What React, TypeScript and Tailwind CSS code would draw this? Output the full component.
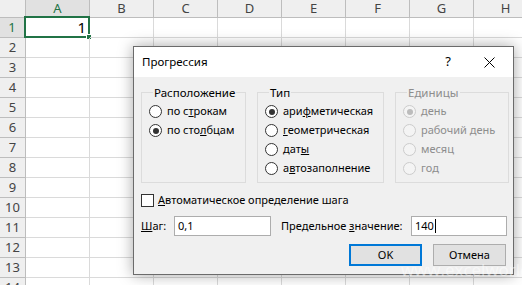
import React from "react";

const cols = ["A", "B", "C", "D", "E", "F", "G", "H"];
const rows = Array.from({ length: 14 }, (_, i) => i + 1);

function Radio({ checked, disabled }: { checked?: boolean; disabled?: boolean }) {
  return (
    <span
      className={
        "flex h-[13px] w-[13px] shrink-0 items-center justify-center rounded-full border " +
        (disabled ? "border-[#cccccc] bg-[#f4f4f4]" : "border-[#333333] bg-white")
      }
    >
      {checked && (
        <span className={"h-[6px] w-[6px] rounded-full " + (disabled ? "bg-[#bcbcbc]" : "bg-[#333333]")} />
      )}
    </span>
  );
}

function RadioRow({
  children,
  checked,
  disabled,
}: {
  children: React.ReactNode;
  checked?: boolean;
  disabled?: boolean;
}) {
  return (
    <div className={"flex h-[19px] items-center gap-[5px] whitespace-nowrap " + (disabled ? "text-[#8d8d8d]" : "text-black")}>
      <Radio checked={checked} disabled={disabled} />
      <span>{children}</span>
    </div>
  );
}

function Group({
  legend,
  width,
  disabled,
  children,
}: {
  legend: string;
  width: string;
  disabled?: boolean;
  children: React.ReactNode;
}) {
  return (
    <fieldset className={"h-[98px] shrink-0 border border-[#dcdcdc] pl-[7px] " + width}>
      <legend className={"ml-[4px] px-[1px] text-[11.5px] leading-[15px] " + (disabled ? "text-[#8d8d8d]" : "text-black")}>
        {legend}
      </legend>
      <div className="mt-[2px] flex flex-col">{children}</div>
    </fieldset>
  );
}

export default function App() {
  return (
    <div className="relative h-[285px] w-[522px] overflow-hidden bg-white" style={{ fontFamily: "'Noto Sans', sans-serif" }}>
      {/* Spreadsheet grid */}
      <div className="grid grid-cols-[26px_repeat(8,64px)] grid-rows-[18px_repeat(14,20px)]">
        <div className="border-b border-r border-[#bdbdbd] bg-[#efefef]" />
        {cols.map((c) => (
          <div
            key={c}
            className={
              "flex items-center justify-center border-r text-[13px] leading-none " +
              (c === "A"
                ? "border-b-2 border-b-[#217346] border-r-[#bdbdbd] bg-[#e1e1e1] text-[#217346]"
                : "border-b border-[#bdbdbd] bg-[#efefef] text-[#444444]")
            }
          >
            {c}
          </div>
        ))}
        {rows.map((r) => (
          <React.Fragment key={r}>
            <div
              className={
                "flex items-center justify-center border-b text-[13px] leading-none " +
                (r === 1
                  ? "border-r-2 border-r-[#217346] border-b-[#bdbdbd] bg-[#e1e1e1] text-[#217346]"
                  : "border-r border-[#bdbdbd] bg-[#efefef] text-[#444444]")
              }
            >
              {r}
            </div>
            {cols.map((c) => (
              <div key={c} className="relative border-b border-r border-[#dadada]">
                {r === 1 && c === "A" && (
                  <div className="absolute -left-[2px] -top-[2px] flex h-[22px] w-[66px] items-center justify-end border-2 border-[#217346] pr-[2px] text-[15px] text-black">
                    1
                    <span className="absolute -bottom-[4px] -right-[4px] h-[6px] w-[6px] border border-white bg-[#217346]" />
                  </div>
                )}
              </div>
            ))}
          </React.Fragment>
        ))}
      </div>

      {/* Dialog window */}
      <div className="absolute left-[133px] top-[46px] flex h-[229px] w-[381px] flex-col border border-[#6b6b6b] bg-[#f0f0f0] text-[11px] text-black shadow-[0_0_14px_rgba(0,0,0,0.35)]">
        <div className="flex h-[30px] shrink-0 items-center bg-white pl-[8px] text-[11.5px]">
          <span className="flex-1">Прогрессия</span>
          <span className="w-[20px] text-center text-[13px]">?</span>
          <span className="ml-[25px] mr-[18px] flex w-[12px] items-center justify-center">
            <svg width="11" height="11" viewBox="0 0 11 11">
              <path d="M0.5 0.5 L10.5 10.5 M10.5 0.5 L0.5 10.5" stroke="#000" strokeWidth="1" />
            </svg>
          </span>
        </div>

        <div className="flex flex-col pl-[7px] pr-[6px] pt-[8px]">
          <div className="flex gap-[11px]">
            <Group legend="Расположение" width="w-[105px]">
              <RadioRow>
                по с<u>т</u>рокам
              </RadioRow>
              <RadioRow checked>
                по сто<u>л</u>бцам
              </RadioRow>
            </Group>
            <Group legend="Тип" width="w-[127px]">
              <RadioRow checked>
                ари<u>ф</u>метическая
              </RadioRow>
              <RadioRow>
                <u>г</u>еометрическая
              </RadioRow>
              <RadioRow>
                дат<u>ы</u>
              </RadioRow>
              <RadioRow>
                а<u>в</u>тозаполнение
              </RadioRow>
            </Group>
            <Group legend="Единицы" width="w-[114px]" disabled>
              <RadioRow checked disabled>
                день
              </RadioRow>
              <RadioRow disabled>рабочий день</RadioRow>
              <RadioRow disabled>месяц</RadioRow>
              <RadioRow disabled>год</RadioRow>
            </Group>
          </div>

          <div className="mt-[9px] flex h-[16px] items-center gap-[4px] whitespace-nowrap">
            <span className="h-[13px] w-[13px] border border-[#333333] bg-white" />
            <span>
              <u>А</u>втоматическое определение шага
            </span>
          </div>

          <div className="mt-[8px] flex h-[20px] items-center whitespace-nowrap">
            <span className="w-[33px]">
              <u>Ш</u>аг:
            </span>
            <div className="flex h-[20px] w-[97px] items-center border border-[#adadad] bg-white pl-[3px]">0,1</div>
            <span className="ml-[10px] w-[130px]">
              Предельное <u>з</u>начение:
            </span>
            <div className="flex h-[20px] w-[96px] items-center border border-[#adadad] bg-white pl-[3px]">
              140<span className="ml-[1px] h-[14px] w-[1px] bg-black" />
            </div>
          </div>

          <div className="mt-[8px] flex justify-end gap-[11px] pr-[1px]">
            <div className="flex h-[22px] w-[73px] items-center justify-center border-2 border-[#0078d7] bg-[#e1e1e1]">
              OK
            </div>
            <div className="flex h-[22px] w-[73px] items-center justify-center border border-[#adadad] bg-[#e1e1e1]">
              Отмена
            </div>
          </div>
        </div>
      </div>

      {/* Watermark */}
      <div className="absolute left-[401px] top-[260px] whitespace-nowrap text-[17px] leading-[20px] text-white/50" style={{ fontFamily: "'Open Sans', sans-serif" }}>
        www.excelworld.ru
      </div>
    </div>
  );
}
